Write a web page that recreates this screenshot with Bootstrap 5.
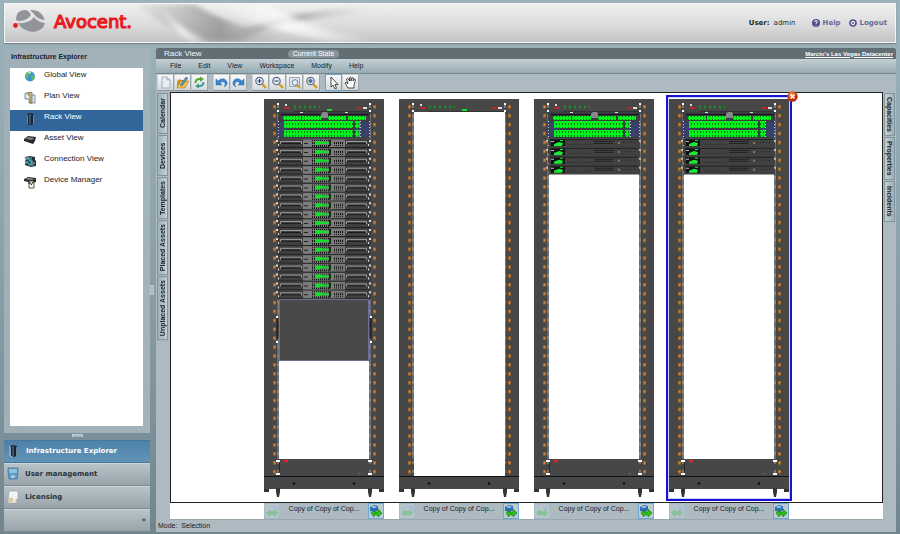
<!DOCTYPE html>
<html lang="en">
<head>
<meta charset="utf-8">
<meta name="viewport" content="width=device-width, initial-scale=1">
<title>Avocent - Rack View</title>
<link href="https://cdn.jsdelivr.net/npm/bootstrap@5.3.0/dist/css/bootstrap.min.css" rel="stylesheet">
<style>
body{font-family:"Liberation Sans",Arial,sans-serif;font-size:8px;line-height:10px;color:#17222a;background:linear-gradient(#9cb3bb,#8fa5ae 40%,#71858f)}
button{font:inherit;color:inherit;border:0;padding:0;background:none}
svg{display:block;flex:none}
.app{padding:3px 4px 4px}
.masthead{height:40px;border:1px solid #f3f6f7;background:linear-gradient(#f0f0f0,#dcdcdc 55%,#c3c3c3);box-shadow:0 1px 1px #74828a;position:relative;font-family:"DejaVu Sans",Verdana,sans-serif;font-size:7px;margin-bottom:5px;color:#1b2c30}
.swoosh{position:absolute;inset:0;width:390px;height:38px}
.masthead a{color:#666a96;text-decoration:none;font-weight:700;gap:3px}
.masthead a+a{margin-left:8px}
.side{width:146px}
.explorer{background:linear-gradient(90deg,#a1b0b8,#a4b3bb);border-radius:3px 3px 0 0;padding:4px 7px 7px 6px}
.explorer h2{font-size:7px;line-height:10px;font-weight:700;margin:0 0 6px 1px}
.views{background:#fff}
.views a{display:flex;height:21px;padding:2px 0 0 14px;color:#222;text-decoration:none;gap:8px}
.views a span{line-height:10px}
.views a.on{background:#32669a;color:#fff}
.grip{height:7px;padding-top:1px}
.grip i{display:block;width:11px;height:4px;margin:auto;background:#a9b8bf;border:1px solid #c2ced3;border-bottom-color:#778991}
.stack{background:#788b95}
.stack button{display:flex;align-items:center;width:100%;height:23px;padding:0 4px 2px 3px;gap:6px;font:700 7px/10px "DejaVu Sans",Verdana,sans-serif;color:#26323a;background:linear-gradient(#b8c3c8,#98a4aa);border-top:1px solid #cbd4d8;border-bottom:1px solid #7b8a92;text-align:left}
.stack button.on{background:linear-gradient(#4e82aa,#6392b7);color:#fff;border-color:#4579a2}
.gutter{width:6px;display:flex;align-items:center}
.gutter i{width:4px;height:10px;background:#a9b8bf;border:1px solid #bac7cd}
.work{background:#adbac1;min-width:0}
.titlebar{height:11px;background:#616e74;color:#f4f7f8;padding:0 3px 0 8px;border-radius:2px 2px 0 0}
.state{font-size:7px;line-height:8px;background:#87959b;color:#fff;border-radius:4px;padding:0 5px;margin-left:86px}
.titlebar a{color:#fff;font:700 6px/10px "Liberation Sans",Arial,sans-serif}
.menus{height:15px;background:linear-gradient(#c4d1d6,#97aab2);border-bottom:1px solid #78878e;padding-left:14px;gap:17px;font-size:7px}
.tools{height:18px;padding:0 1px}
.tools button{width:17px;height:17px;display:flex;align-items:center;justify-content:center;background:linear-gradient(#f9f9f9,#d5d9db);border:1px solid #c8cdd0;border-bottom-color:#86939a;border-right-color:#9ba5aa}
.tools button.on{border-color:#66a5cf}
.tools .set{margin-right:5px}
.rail{width:14px;padding:1px 2px 0 1px;gap:1px}
.rail button{writing-mode:vertical-rl;min-height:41px;padding:3px 0;width:11px;font-weight:700;line-height:9px;font-size:7px;border:1px solid #84939b;background:linear-gradient(90deg,#c4d1d6,#9eb0b8);text-align:center}
.rail.west button{transform:rotate(180deg)}
.rail.east{width:13px}
.floor{background:#fff;border:1px solid #222;padding:5px 0 4px;gap:15px}
.rack{width:120px;position:relative}
.rack.chosen{outline:2px solid #1912cf;outline-offset:1px;box-shadow:0 0 0 1px #c8d2ff}
.close-x{position:absolute;right:-9px;top:-7px;width:11px;height:11px}
.names{background:#fff;gap:15px;border-bottom:1px solid #99a7ae}
.plate{width:120px;height:16px;background:#adbac1;font-size:7px}
.plate button{width:16px;height:16px;border:1px solid #69a9d2;flex:none;background:#bccbd3}
.plate button:disabled{border-color:#a3bac6;opacity:.6}
.plate span{flex:1;line-height:11px;text-align:center;white-space:nowrap}
.status{height:12px;padding:1px 2px;font-size:7px}
</style>
</head>
<body>
<svg width="0" height="0" class="position-absolute" aria-hidden="true">
<defs>
<filter id="soft" x="-10%" y="-10%" width="120%" height="120%"><feGaussianBlur stdDeviation="2.500"/></filter>
<linearGradient id="sw" x1="0" x2="1"><stop stop-color="#999" stop-opacity=".1"/><stop offset=".45" stop-color="#858585" stop-opacity=".7"/><stop offset="1" stop-color="#fff" stop-opacity="0"/></linearGradient>
<linearGradient id="sh" x1="0" x2="1"><stop stop-color="#fff" stop-opacity="0"/><stop offset=".4" stop-color="#fff" stop-opacity=".8"/><stop offset="1" stop-color="#fff" stop-opacity="0"/></linearGradient>
<radialGradient id="orb" cx=".4" cy=".3"><stop stop-color="#f59a4a"/><stop offset="1" stop-color="#c22d08"/></radialGradient>
<pattern id="pips" width="120" height="8.9" patternUnits="userSpaceOnUse" y="5"><path d="M9 2h3v3.600h-3zM109 2h3v3.600h-3z" fill="#9c6429"/><path d="M9.800 3h1.500v1.500h-1.500zM109.800 3h1.500v1.500h-1.500z" fill="#e59040"/><path d="M13.500 2h1v3h-1zM105.500 2h1v3h-1z" fill="#a5a9ab"/></pattern>
<pattern id="ports" width="3" height="4" patternUnits="userSpaceOnUse"><path fill="#00f41c" d="M0 0h3v4H0z"/><path fill="#08760f" d="M1 1h1v2H1z"/></pattern>
<pattern id="vent" width="2" height="3" patternUnits="userSpaceOnUse"><path fill="#777" d="M0 0h2v3H0z"/><path fill="#121212" d="M0 0h1v2H0z"/></pattern>
<g id="frame">
<path fill="#474747" d="M0 1h120v393h-5v-3H5v3H0z"/>
<path fill="#686d70" d="M13 18h2v343h-2zM105 18h2v343h-2z"/>
<path fill="url(#pips)" d="M0 5h120v373H0z"/>
<path stroke="#111" d="M0 378.500h120"/><path fill="#333" d="M0 391h5v3H0zM115 391h5v3h-5zM12 390h4v4l-1 5h-2l-1-5zM104 390h4v4l-1 5h-2l-1-5z"/>
<circle cx="30" cy="385.500" r="1.300" fill="#111"/><circle cx="90" cy="385.500" r="1.300" fill="#111"/>
<path fill="#fff" d="M13 5h2v2h-2zM13 12h2v2h-2zM105 5h2v2h-2zM105 12h2v2h-2z"/>
<path fill="#b32b31" d="M20 9h6v2h-6zM93 9h5v2h-5z"/><path fill="#ddd" d="M21 6h2v2h-2zM99 9h4v2h-4z"/>
<path stroke="#1c8a2a" stroke-width="3" stroke-dasharray="2 3" d="M30 9h26"/><path stroke="#333" d="M30 13.500h75"/>
</g>
<g id="base"><path fill="#474747" d="M15 361h90v17H15z"/><path d="M15.500 361v17" stroke="#292929"/><path fill="#fff" d="M12 362h4v2h-4zM12 375h4v2h-4zM104 362h4v2h-4zM104 375h4v2h-4z"/><path fill="#e22" d="M20 362h4v2h-4z"/><path fill="#8a5a3b" d="M94 375h3v1h-3z"/></g>
<g id="switches">
<path fill="#3c3c44" d="M14 14h92v26H14z"/><path fill="#111" d="M17 16h88v1H17z"/>
<path fill="url(#ports)" d="M19 18h18v4H19zM38 18h19v4H38zM64 18h18v4H64zM84 18h18v4H84z"/>
<path fill="#888" d="M57 16l2-2h4l1 2v4h-7z"/>
<path fill="#39406a" d="M13 24h10v15H13zM91 24h15v15H91z"/>
<path fill="url(#ports)" d="M20 23h69v7H20zM91 23h5v7h-5zM20 32h69v7H20zM91 32h5v7h-5z"/>
<path stroke="#ccd" stroke-dasharray="1 2" d="M14.500 23v16M105.500 23v16M96.500 23v16"/><path fill="#ddd" d="M36 14h3v1h-3zM81 14h3v1h-3z"/>
</g>
<g id="server"><path fill="#404040" d="M13 0h94v8.900H13z"/><path fill="none" stroke="#9c9c9c" d="M16.500 5v-2.500h21V5M82.500 5v-2.500h20V5"/><path stroke="#1c1c1c" d="M17 4.500h20M83 4.500h19M14 8.500h92"/>
<path fill="#7c7c7c" d="M39 .5h42v7.500H39z"/><path fill="url(#vent)" d="M47 1h18v7H47zM70 2h10v5H70z"/><path fill="#222" d="M40 4h4v1h-4zM65 1h2v6h-2z"/><path fill="#11df2b" d="M51 2h6l2 1h6v2h-8l-2 1h-4z"/>
<path fill="#ddd" d="M12 1h2v2h-2zM14 5h1v2h-1zM105 1h2v2h-2zM104 5h1v2h-1z"/></g>
<g id="blade"><path fill="#414141" d="M14 0h92v8.900H14z"/><path stroke="#222" d="M16 .5h88M60 2.500h20M60 4.500h19"/><path fill="#111" d="M17 1h14v6H17z"/><path fill="#19ea37" d="M20 5l5-2 4 1-1 3h-8zM26 1h3v1h-3z"/><path fill="#bbb" d="M17 2h3v1h-3zM12 1h2v2h-2zM14 6h1v1h-1zM105 1h2v2h-2z"/><path fill="#867744" d="M84 3h2v2h-2z"/><path stroke="#202020" stroke-dasharray="1 2" d="M88 3.500h14M35 5.500h22"/></g>
<g id="blades"><use href="#blade" y="41"/><use href="#blade" y="49.900"/><use href="#blade" y="58.800"/><use href="#blade" y="67.700"/></g>
<g id="servers3"><use href="#server"/><use href="#server" y="8.900"/><use href="#server" y="17.800"/></g>
<g id="go"><path d="M1 3l4-2 4 1v4L6 8 1 7z" fill="#2c70b8"/><path d="M2 3l3-1 3 1-3 1z" fill="#b9dbf5"/><path d="M2 9l3-3v2h4V5l4 4-4 4v-2H5v2z" fill="#2bbd18" stroke="#137a0b" stroke-width=".6"/></g>
<g id="back"><path d="M1 9l4-4v2h4V5l4 4-4 4v-2H5v2z" fill="#70c87c"/><path d="M8 3l3-1 2 1v4l-3-1z" fill="#9fc3dc"/></g>
<g id="lens"><path d="M8 8l4 4" stroke="#d29b19" stroke-width="2.400"/><circle cx="5.500" cy="5" r="3.700" fill="#e4eefb" stroke="#596f8d" stroke-width="1.200"/></g>
<g id="cab"><path d="M3 2l3-1 4 1v10l-4 1-3-1z" fill="#142337"/><path d="M3.500 3v9M9.500 3v9M6 2v10" stroke="#8fb0cc" stroke-width=".7"/></g>
</defs></svg>

<div class="app d-flex flex-column min-vh-100">
<header class="masthead d-flex align-items-center">
<svg class="swoosh" viewBox="0 0 390 38" preserveAspectRatio="none"><g filter="url(#soft)"><path d="M130 0h60q40 28 130 38H200Q155 22 130 0" fill="url(#sw)"/><path d="M155 0q15 25 52 38h-18Q162 25 155 0" fill="url(#sh)"/><path d="M205 38Q260 8 390 0v9Q270 12 235 38" fill="url(#sw)"/><path d="M215 0h45q45 26 120 38h-50Q240 22 215 0" fill="url(#sh)"/></g></svg>
<svg class="position-relative" width="140" height="38" viewBox="0 0 140 38" role="img" aria-label="Avocent">
<g fill="#92949a"><path d="M11 15q0-8 8-9 5 0 7 5-3 5-11 6-4 0-4-2M25 6q9-1 13 6 2 3 1 4-7-1-10-6zM13 19q11 1 16-6 3 5 11 6-2 8-12 9-11-1-15-9"/></g><circle cx="10.500" cy="21.500" r="2.400" fill="#ea1a20"/>
<text x="49" y="24" font-family="DejaVu Sans,Verdana,sans-serif" font-size="18" fill="#ea1a20" stroke="#ea1a20" stroke-width="1.200">Avocent.</text></svg>
<div class="ms-auto d-flex align-items-center position-relative pe-2"><b>User:</b><span class="ms-1">admin</span>
<a href="#" class="d-flex align-items-center ms-3"><svg width="8" height="8" viewBox="0 0 8 8"><circle cx="4" cy="4" r="4" fill="#4b4d8c"/><path d="M2.700 3q0-1.500 1.300-1.500T5.300 3Q5.200 3.800 4 4.300V5M4 6v.8" stroke="#fff" fill="none"/></svg>Help</a>
<a href="#" class="d-flex align-items-center"><svg width="8" height="8" viewBox="0 0 8 8"><circle cx="4" cy="4" r="3" fill="#fff" stroke="#4b4d8c" stroke-width="1.700"/><circle cx="4" cy="4" r="1" fill="#4b4d8c"/></svg>Logout</a></div>
</header>

<div class="d-flex flex-fill">
<aside class="side d-flex flex-column flex-shrink-0">
<section class="explorer flex-fill d-flex flex-column"><h2>Infrastructure Explorer</h2>
<nav class="views flex-fill">
<a href="#"><svg width="12" height="14" viewBox="0 0 12 14"><circle cx="6" cy="6.500" r="5" fill="#3f93d3"/><path d="M2 3q2-2 5-1l-1 3-2 1v3L2 8zM7 6l3-1 1 2-3 4z" fill="#62bd62"/><path d="M4 2l3 1" stroke="#d4f5ff"/></svg><span>Global View</span></a>
<a href="#"><svg width="12" height="14" viewBox="0 0 12 14"><path d="M1 2h5v2h5v8H5V8H1z" fill="#dcebf1" stroke="#536673" stroke-width=".7"/><path d="M4 1.500h4V12H6V4H4z" fill="#d8c07f" stroke="#4e4327" stroke-width=".6"/></svg><span>Plan View</span></a>
<a href="#" class="on"><svg width="12" height="14" viewBox="0 0 12 14"><use href="#cab"/></svg><span>Rack View</span></a>
<a href="#"><svg width="12" height="14" viewBox="0 0 12 14"><path d="M0 6l4-3 8 1-1 4-2 3-9-3z" fill="#282828"/><path d="M1 6l3-2 6 1-2 2z" fill="#7d7d7d"/></svg><span>Asset View</span></a>
<a href="#"><svg width="12" height="14" viewBox="0 0 12 14"><path d="M1 3l5-1 5 1v3l1 1v5l-5 1-6-2V7l1-1z" fill="#253038"/><path d="M1 5h4v2h4M1 9h4v2h5M7 3v8" stroke="#46c3ce" fill="none"/><path d="M2 4h4M1 8h3M7 9h4" stroke="#bbb"/></svg><span>Connection View</span></a>
<a href="#"><svg width="12" height="14" viewBox="0 0 12 14"><path d="M0 4l4-2 8 1v4L8 8 0 6z" fill="#303030"/><path d="M1 4l3-1 6 1-2 1z" fill="#999"/><path d="M5 6h5v7H5z" fill="#faf5d9" stroke="#333" stroke-width=".8"/><path d="M7 10l3-4M4 8h3" stroke="#111"/></svg><span>Device Manager</span></a>
</nav></section>
<div class="grip"><i></i></div>
<nav class="stack">
<button class="on" type="button"><svg width="13" height="14" viewBox="0 0 13 14"><use href="#cab"/><path d="M3 2v10l3 1" stroke="#e2f0f8" fill="none" stroke-width=".6"/></svg>Infrastructure Explorer</button>
<button type="button"><svg width="12" height="14" viewBox="0 0 12 14"><path d="M1 1h10v4l-1 7H2L1 5z" fill="#5f9dc6" stroke="#356e98" stroke-width=".7"/><path d="M2 3h8M2 5h8" stroke="#c7e4f4"/><path d="M4 11V9q2-2 4 0v2" fill="#a7cee6"/></svg>User management</button>
<button type="button"><svg width="12" height="14" viewBox="0 0 12 14"><path d="M2 1h9v8l-2 4H1z" fill="#f3f3f1" stroke="#9b9b95" stroke-width=".6"/><circle cx="4" cy="10" r="2.500" fill="#d9cca8"/><path d="M8 12l1-3h2z" fill="#aaa"/></svg>Licensing</button>
<button type="button" class="justify-content-end" aria-label="More sections">»</button>
</nav></aside>
<div class="gutter"><i></i></div>

<main class="work flex-fill d-flex flex-column">
<div class="titlebar d-flex align-items-center"><span>Rack View</span><span class="state">Current State</span><a href="#" class="ms-auto">Marcio's Las Vegas Datacenter</a></div>
<nav class="menus d-flex align-items-center"><button type="button">File</button><button type="button">Edit</button><button type="button">View</button><button type="button">Workspace</button><button type="button">Modify</button><button type="button">Help</button></nav>
<div class="tools d-flex">
<div class="set d-flex">
<button type="button" aria-label="New"><svg width="13" height="13" viewBox="0 0 13 13"><path d="M3 1h5l3 3v8H3z" fill="#e8f0f5" stroke="#8fa1af" stroke-width=".8"/><path d="M8 1v3h3" fill="#bacbd6" stroke="#8fa1af" stroke-width=".6"/></svg></button>
<button type="button" aria-label="Open"><svg width="13" height="13" viewBox="0 0 13 13"><path d="M1 5l3-2 1 1h5v7H1z" fill="#cf941b"/><path d="M1 12l3-7h9l-4 7z" fill="#f3c44d" stroke="#94640c" stroke-width=".5"/><path d="M4 9l6-8 2 1-6 8z" fill="#5d93bb" stroke="#345" stroke-width=".4"/></svg></button>
<button type="button" aria-label="Refresh"><svg width="13" height="13" viewBox="0 0 13 13" fill="none" stroke-width="2"><path d="M2.500 7q0-4 4-4h1" stroke="#56aa35"/><path d="M7 .5l4 2.500-4 3z" fill="#56aa35"/><path d="M10.500 6q0 4-4 4h-1" stroke="#3e9cac"/><path d="M6 7.500v5L2 10z" fill="#3e9c7c"/></svg></button></div>
<div class="set d-flex">
<button type="button" aria-label="Undo"><svg width="13" height="13" viewBox="0 0 13 13"><path d="M1 3v6h6L5 7q3-3 5 0 1 2-1 4 4-2 3-5-3-6-9-1z" fill="#3586d0" stroke="#2464a4" stroke-width=".5"/></svg></button>
<button type="button" aria-label="Redo"><svg width="13" height="13" viewBox="0 0 13 13"><path d="M12 3v6H6l2-2Q5 4 3 7q-1 2 1 4-4-2-3-5 3-6 9-1z" fill="#3586d0" stroke="#2464a4" stroke-width=".5"/></svg></button></div>
<div class="set d-flex">
<button type="button" aria-label="Zoom in"><svg width="13" height="13" viewBox="0 0 13 13"><use href="#lens"/><path d="M3.500 5h4M5.500 3v4" stroke="#253d5c"/></svg></button>
<button type="button" aria-label="Zoom out"><svg width="13" height="13" viewBox="0 0 13 13"><use href="#lens"/><path d="M3.500 5h4" stroke="#253d5c"/></svg></button>
<button type="button" aria-label="Zoom to area"><svg width="13" height="13" viewBox="0 0 13 13"><path d="M1.500 1.500h10v9h-10z" fill="#dde4ea" stroke="#9ca8b1"/><path d="M9 9l3 3" stroke="#d29b19" stroke-width="2"/><circle cx="7" cy="6.500" r="2.800" fill="#e4eefb" stroke="#6e829c"/></svg></button>
<button type="button" aria-label="Fit"><svg width="13" height="13" viewBox="0 0 13 13"><use href="#lens"/><path d="M5.500 2.500L8 5 5.500 7.500 3 5z" fill="#526b8a"/></svg></button></div>
<div class="d-flex">
<button class="on" type="button" aria-label="Select"><svg width="13" height="13" viewBox="0 0 13 13"><path d="M4 1v10l2-2 2 4 1.500-.7L8 8.500h3z" fill="#fff" stroke="#222" stroke-width=".8"/></svg></button>
<button type="button" aria-label="Pan"><svg width="13" height="13" viewBox="0 0 13 13"><path d="M4 12L1 7q1-2 3 1L2.500 3q1-1.500 2 0l1 2V1.500q1-1 1.500 0V5l1-3q1-1 1.500 0L9 5l1.500-2q1 0 1 1L10 9v3z" fill="#fff" stroke="#222" stroke-width=".8"/></svg></button></div>
</div>

<div class="d-flex flex-fill">
<div class="rail west d-flex flex-column"><button type="button">Calendar</button><button type="button">Devices</button><button type="button">Templates</button><button type="button">Placed Assets</button><button type="button">Unplaced Assets</button></div>
<div class="flex-fill d-flex flex-column">
<div class="floor d-flex justify-content-center flex-fill">
<div class="rack"><svg width="120" height="400" viewBox="0 0 120 400"><use href="#frame"/><path fill="#fff" d="M15 263h90v98H15z"/><use href="#switches"/>
<use href="#servers3" y="41"/><use href="#servers3" y="67.700"/><use href="#servers3" y="94.400"/><use href="#servers3" y="121.100"/><use href="#servers3" y="147.800"/><use href="#servers3" y="174.500"/>
<path fill="#494949" stroke="#6b7090" d="M15.500 201.500h89v61h-89z"/><path d="M13.500 202v60M106.500 202v60" stroke="#676c85"/><path d="M13.500 220v21M106.500 220v21" stroke="#202020" stroke-width="2"/><path fill="#fff" d="M12 218h2v2h-2zM12 243h2v2h-2zM106 218h2v2h-2zM106 243h2v2h-2z"/><path fill="#11df2b" d="M63 11h5v2h-5z"/><use href="#base"/></svg></div>
<div class="rack"><svg width="120" height="400" viewBox="0 0 120 400"><use href="#frame"/><path fill="#fff" d="M15 14h91v364H15z"/><path fill="#11df2b" d="M63 11h5v2h-5z"/></svg></div>
<div class="rack"><svg width="120" height="400" viewBox="0 0 120 400"><use href="#frame"/><path fill="#fff" d="M15 76h90v285H15z"/><use href="#switches"/><use href="#blades"/><use href="#base"/></svg></div>
<div class="rack chosen align-self-start"><svg width="120" height="400" viewBox="0 0 120 400"><use href="#frame"/><path fill="#fff" d="M15 76h90v285H15z"/><use href="#switches"/><use href="#blades"/><use href="#base"/></svg>
<button class="close-x" type="button" aria-label="Remove rack"><svg width="11" height="11" viewBox="0 0 11 11"><circle cx="5.500" cy="5.500" r="5.200" fill="url(#orb)"/><path d="M3.500 3.500l4 4M7.500 3.500l-4 4" stroke="#fff" stroke-width="1.600"/></svg></button></div>
</div>
<div class="names d-flex justify-content-center">
<div class="plate d-flex"><button type="button" disabled aria-label="Previous"><svg width="14" height="14" viewBox="0 0 14 14"><use href="#back"/></svg></button><span>Copy of Copy of Cop...</span><button type="button" aria-label="Next"><svg width="14" height="14" viewBox="0 0 14 14"><use href="#go"/></svg></button></div>
<div class="plate d-flex"><button type="button" disabled aria-label="Previous"><svg width="14" height="14" viewBox="0 0 14 14"><use href="#back"/></svg></button><span>Copy of Copy of Cop...</span><button type="button" aria-label="Next"><svg width="14" height="14" viewBox="0 0 14 14"><use href="#go"/></svg></button></div>
<div class="plate d-flex"><button type="button" disabled aria-label="Previous"><svg width="14" height="14" viewBox="0 0 14 14"><use href="#back"/></svg></button><span>Copy of Copy of Cop...</span><button type="button" aria-label="Next"><svg width="14" height="14" viewBox="0 0 14 14"><use href="#go"/></svg></button></div>
<div class="plate d-flex"><button type="button" disabled aria-label="Previous"><svg width="14" height="14" viewBox="0 0 14 14"><use href="#back"/></svg></button><span>Copy of Copy of Cop...</span><button type="button" aria-label="Next"><svg width="14" height="14" viewBox="0 0 14 14"><use href="#go"/></svg></button></div>
</div></div>
<div class="rail east d-flex flex-column"><button type="button">Capacities</button><button type="button">Properties</button><button type="button">Incidents</button></div>
</div>
<div class="status">Mode:&nbsp; Selection</div>
</main></div></div>
<script src="https://cdn.jsdelivr.net/npm/bootstrap@5.3.0/dist/js/bootstrap.bundle.min.js"></script>
</body>
</html>
